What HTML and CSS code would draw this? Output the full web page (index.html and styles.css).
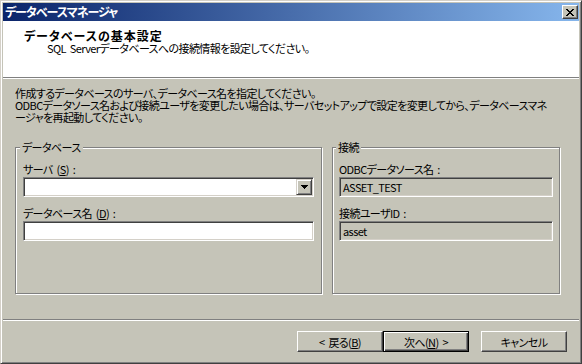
FILE: index.html
```html
<!DOCTYPE html>
<html>
<head lang="ja">
    <meta charset="UTF-8">
    <title>データベースマネージャ</title>
    <link rel="stylesheet" href="styles.css">
</head>
<body>
<div class="window">
    <div class="titlebar">
        <span class="title">データベースマネージャ</span>
        <span class="close-btn">
            <svg width="8" height="7" viewBox="0 0 8 7" shape-rendering="crispEdges"><path d="M0 0h2v1h1v1h2v-1h1v-1h2v1h-1v1h-1v1h-1v1h1v1h1v1h1v1h-2v-1h-1v-1h-2v1h-1v1h-2v-1h1v-1h1v-1h1v-1h-1v-1h-1v-1h-1z" fill="#000"/></svg>
        </span>
    </div>
    <div class="header">
        <div class="header-title">データベースの基本設定</div>
        <div class="header-sub">SQL Serverデータベースへの接続情報を設定してください。</div>
    </div>
    <div class="rule"></div>
    <div class="content">
        <p class="desc">作成するデータベースのサーバ、データベース名を指定してください。<br>ODBCデータソース名および接続ユーザを変更したい場合は、サーバセットアップで設定を変更してから、データベースマネ<br>ージャを再起動してください。</p>
        <div class="groups">
            <div class="group group-db">
                <div class="group-title">データベース</div>
                <div class="field">
                    <div class="field-label">サーバ (<u>S</u>) :</div>
                    <div class="textbox combo">
                        <span class="combo-btn">
                            <svg width="7" height="4" viewBox="0 0 7 4" shape-rendering="crispEdges"><path d="M0 0h7v1h-1v1h-1v1h-1v1h-1v-1h-1v-1h-1v-1h-1z" fill="#000"/></svg>
                        </span>
                    </div>
                </div>
                <div class="field">
                    <div class="field-label">データベース名 (<u>D</u>) :</div>
                    <div class="textbox"></div>
                </div>
            </div>
            <div class="group group-conn">
                <div class="group-title">接続</div>
                <div class="field">
                    <div class="field-label">ODBCデータソース名 :</div>
                    <div class="textbox readonly">ASSET_TEST</div>
                </div>
                <div class="field">
                    <div class="field-label">接続ユーザID :</div>
                    <div class="textbox readonly">asset</div>
                </div>
            </div>
        </div>
    </div>
    <div class="rule"></div>
    <div class="footer">
        <button class="btn">&lt; 戻る(<u>B</u>)</button>
        <button class="btn btn-default">次へ(<u>N</u>) &gt;</button>
        <button class="btn btn-cancel">キャンセル</button>
    </div>
</div>
</body>
</html>
```

FILE: styles.css
```css
* {
    margin: 0;
    padding: 0;
    box-sizing: border-box;
}
body {
    background-color: #c5c4b8;
    font-family: "Noto Sans CJK JP", "Liberation Sans", sans-serif;
    font-size: 11px;
    letter-spacing: -0.6px;
    word-spacing: 2px;
    font-feature-settings: "palt";
    color: #000;
}
.window {
    width: 582px;
    height: 364px;
    display: flex;
    flex-direction: column;
    border: 1px solid;
    border-color: #d4d0c8 #404040 #404040 #d4d0c8;
    box-shadow: inset 1px 1px #fff, inset -1px -1px #808080;
    padding: 2px;
}
.titlebar {
    height: 18px;
    display: flex;
    align-items: center;
    justify-content: space-between;
    padding: 0 1px 0 2px;
    background: linear-gradient(to right, #0a246a, #86b6ec);
    color: #fff;
    font-size: 12px;
    font-weight: bold;
    letter-spacing: -1px;
}
.title {
    line-height: 12px;
}
.close-btn {
    width: 16px;
    height: 14px;
    display: flex;
    align-items: center;
    justify-content: center;
    background-color: #c5c4b8;
    border: 1px solid;
    border-color: #fff #404040 #404040 #fff;
    box-shadow: inset -1px -1px #808080;
}
.header {
    height: 56px;
    background-color: #fff;
    padding: 8px 0 0 21px;
}
.header-title {
    font-size: 12px;
    font-weight: bold;
    letter-spacing: 1px;
    line-height: 13px;
}
.header-sub {
    padding-left: 23px;
    line-height: 13px;
}
.rule {
    border-top: 1px solid #808080;
    border-bottom: 1px solid #fff;
}
.content {
    height: 240px;
    padding: 8px 0 0 12px;
}
.desc {
    line-height: 12px;
    white-space: nowrap;
}
.groups {
    display: flex;
    gap: 10px;
    margin-top: 24px;
}
.group {
    height: 147px;
    border: 1px solid #808080;
    box-shadow: inset 1px 1px #fff, 1px 1px #fff;
    padding: 0 7px;
}
.group-db {
    width: 307px;
}
.group-conn {
    width: 228px;
    padding: 0 6px;
}
.group-title {
    width: max-content;
    margin: -7px 0 0 -3px;
    padding: 0 2px;
    line-height: 12px;
    background-color: #c5c4b8;
}
.field {
    margin-top: 10px;
}
.field-label {
    line-height: 12px;
    margin-bottom: 2px;
}
.textbox {
    height: 20px;
    border: 1px solid;
    border-color: #808080 #fff #fff #808080;
    box-shadow: inset 1px 1px #404040, inset -1px -1px #d4d0c8;
    background-color: #fff;
    padding: 3px 3px 0;
    line-height: 13px;
}
.readonly {
    background-color: #c5c4b8;
}
.combo {
    display: flex;
    justify-content: flex-end;
    padding: 1px;
}
.combo-btn {
    width: 16px;
    height: 16px;
    display: flex;
    align-items: center;
    justify-content: center;
    background-color: #c5c4b8;
    border: 1px solid;
    border-color: #d4d0c8 #404040 #404040 #d4d0c8;
    box-shadow: inset 1px 1px #fff, inset -1px -1px #808080;
}
.footer {
    height: 40px;
    display: flex;
    justify-content: flex-end;
    align-items: flex-start;
    padding: 10px 12px 0 0;
}
.btn {
    width: 86px;
    height: 21px;
    display: flex;
    align-items: center;
    justify-content: center;
    font: inherit;
    letter-spacing: inherit;
    word-spacing: inherit;
    line-height: 12px;
    color: #000;
    background-color: #c5c4b8;
    border: 1px solid;
    border-color: #fff #404040 #404040 #fff;
    box-shadow: inset -1px -1px #808080;
}
.btn-default {
    border-color: #000;
    box-shadow: inset 1px 1px #fff, inset -1px -1px #404040, inset -2px -2px #808080;
}
.btn-cancel {
    margin-left: 12px;
}
```
